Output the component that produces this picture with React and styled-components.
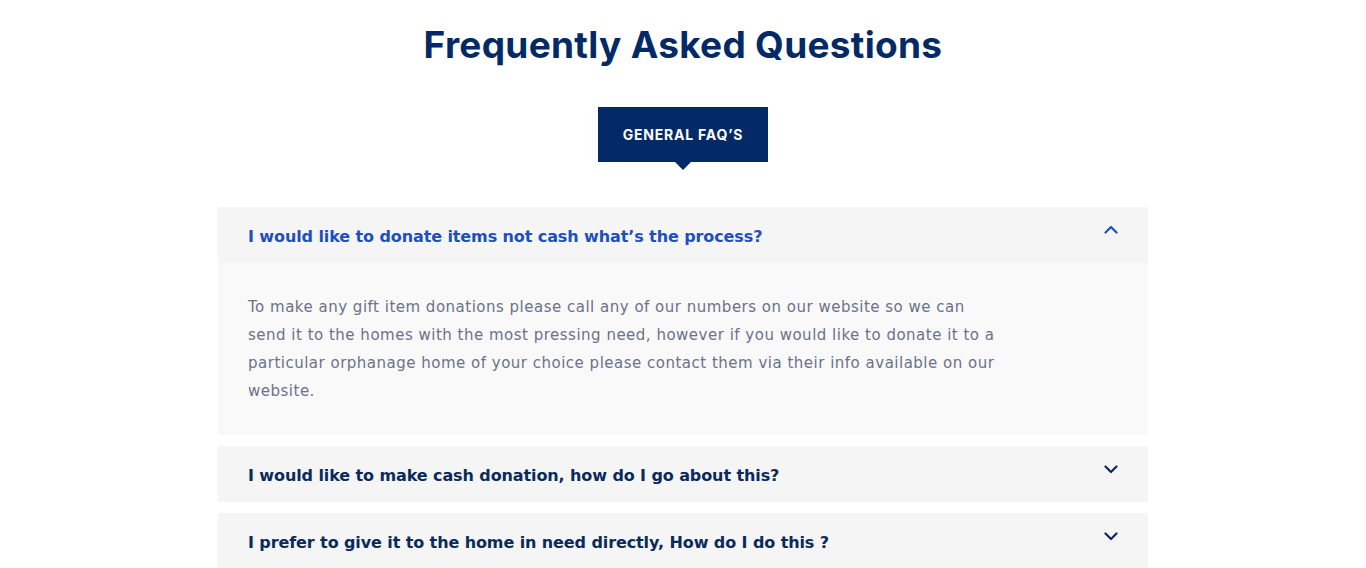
import React, { useState } from "react";
import styled, { createGlobalStyle } from "styled-components";

const Global = createGlobalStyle`
  html, body { margin: 0; padding: 0; background: #ffffff; }
  body { font-family: "Inter", "DejaVu Sans", sans-serif; }
  * { box-sizing: border-box; }
`;

const Page = styled.section`
  display: flex;
  flex-direction: column;
  align-items: center;
  padding-top: 22px;
`;

const Title = styled.h2`
  margin: 0;
  font-family: "Inter", sans-serif;
  font-weight: 700;
  font-size: 37px;
  line-height: 46px;
  color: #032a66;
  letter-spacing: 0.3px;
`;

const Tabs = styled.div`
  display: flex;
  justify-content: center;
  margin-top: 39px;
`;

const Tab = styled.button`
  position: relative;
  width: 170px;
  height: 55px;
  border: none;
  background: #032966;
  color: #ffffff;
  font-family: "Inter", sans-serif;
  font-weight: 700;
  font-size: 14px;
  text-transform: uppercase;
  letter-spacing: 0.8px;
  cursor: pointer;
  &::after {
    content: "";
    position: absolute;
    left: 50%;
    bottom: -8px;
    transform: translateX(-50%);
    border-left: 8px solid transparent;
    border-right: 8px solid transparent;
    border-top: 8px solid #032966;
  }
`;

const List = styled.div`
  width: 930px;
  margin-top: 45px;
  display: flex;
  flex-direction: column;
  gap: 11px;
`;

const Item = styled.div`
  background: #f5f5f6;
`;

const Header = styled.button`
  width: 100%;
  height: 56px;
  display: flex;
  align-items: center;
  justify-content: space-between;
  padding: 0 30px;
  border: none;
  background: #f5f5f6;
  cursor: pointer;
  text-align: left;
  font-family: "DejaVu Sans", sans-serif;
  font-weight: 600;
  font-size: 16px;
  letter-spacing: -0.1px;
  color: ${(p) => (p.$open ? "#1c4fbf" : "#0b2a5c")};
  span { padding-top: 2px; }
`;

const Chevron = styled.svg`
  width: 14px;
  height: 14px;
  flex: none;
  margin-top: -10px;
`;

const Body = styled.div`
  background: #f9f9fa;
  padding: 30px 30px 30px 30px;
`;

const Answer = styled.p`
  margin: 0;
  max-width: 756px;
  font-family: "DejaVu Sans", sans-serif;
  font-weight: 400;
  font-size: 15px;
  letter-spacing: 0.5px;
  line-height: 28px;
  color: #6b7189;
`;

const faqs = [
  {
    q: "I would like to donate items not cash what’s the process?",
    a: "To make any gift item donations please call any of our numbers on our website so we can send it to the homes with the most pressing need, however if you would like to donate it to a particular orphanage home of your choice please contact them via their info available on our website.",
  },
  { q: "I would like to make cash donation, how do I go about this?", a: "" },
  { q: "I prefer to give it to the home in need directly, How do I do this ?", a: "" },
];

function ChevronIcon({ open }) {
  return (
    <Chevron viewBox="0 0 14 14" fill="none">
      <path
        d={open ? "M1.5 9.5 L7 4 L12.5 9.5" : "M1.5 4.5 L7 10 L12.5 4.5"}
        stroke="currentColor"
        strokeWidth="2.2"
        strokeLinecap="round"
        strokeLinejoin="round"
      />
    </Chevron>
  );
}

export default function App() {
  const [open, setOpen] = useState(0);
  return (
    <Page>
      <Global />
      <Title>Frequently Asked Questions</Title>
      <Tabs>
        <Tab>General FAQ’s</Tab>
      </Tabs>
      <List>
        {faqs.map((f, i) => (
          <Item key={i}>
            <Header $open={open === i} onClick={() => setOpen(open === i ? -1 : i)}>
              <span>{f.q}</span>
              <ChevronIcon open={open === i} />
            </Header>
            {open === i && (
              <Body>
                <Answer>{f.a}</Answer>
              </Body>
            )}
          </Item>
        ))}
      </List>
    </Page>
  );
}
